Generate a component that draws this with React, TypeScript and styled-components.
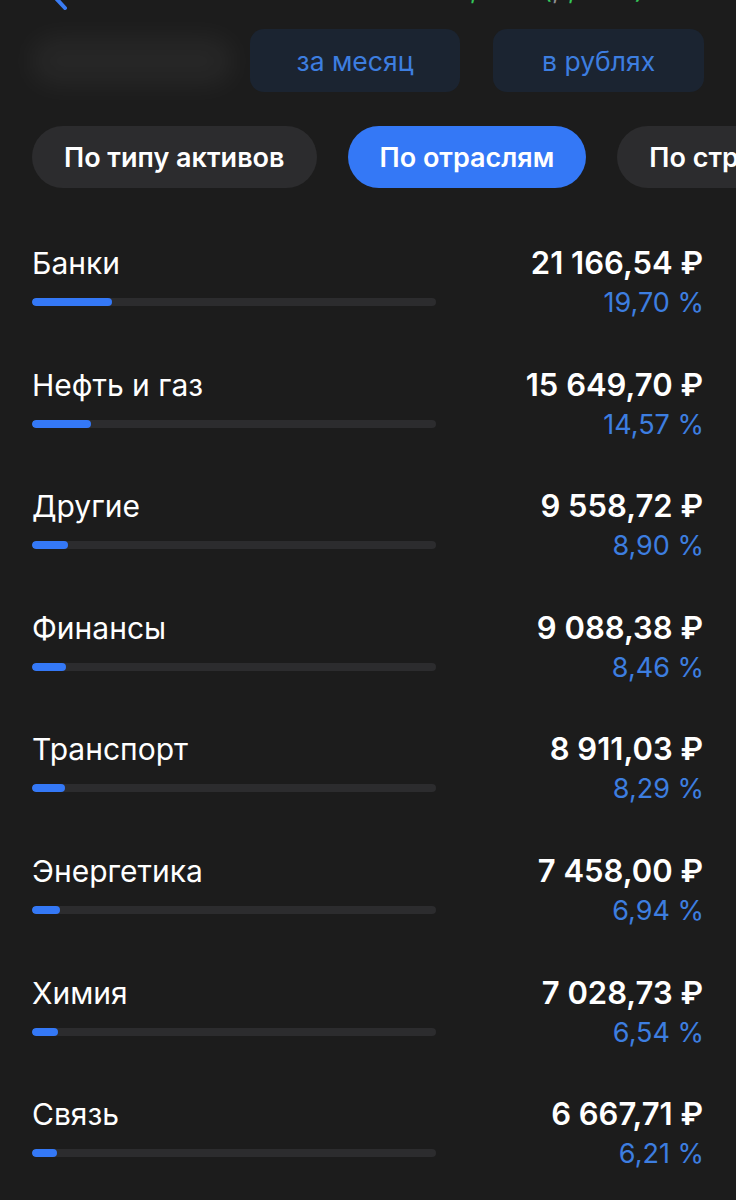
import styled, { createGlobalStyle } from "styled-components";

type SectorType = {
    name: string,
    amount: string,
    pct: number
}

const sectors: SectorType[] = [
    { name: "Банки", amount: "21 166,54 ₽", pct: 19.7 },
    { name: "Нефть и газ", amount: "15 649,70 ₽", pct: 14.57 },
    { name: "Другие", amount: "9 558,72 ₽", pct: 8.9 },
    { name: "Финансы", amount: "9 088,38 ₽", pct: 8.46 },
    { name: "Транспорт", amount: "8 911,03 ₽", pct: 8.29 },
    { name: "Энергетика", amount: "7 458,00 ₽", pct: 6.94 },
    { name: "Химия", amount: "7 028,73 ₽", pct: 6.54 },
    { name: "Связь", amount: "6 667,71 ₽", pct: 6.21 },
]

const formatPct = (v: number) => v.toFixed(2).replace(".", ",") + " %"

const GlobalStyle = createGlobalStyle`
    body {
        margin: 0;
        background: #1c1c1c;
        font-family: Inter, "Noto Sans", sans-serif;
        color: #fff;
    }
`

export default function App() {
    return (
        <Page>
            <GlobalStyle />
            <TopBar>
                <BackIcon width="28" height="40" viewBox="0 0 28 40">
                    <path d="M24 6 L10 22 L23 36" fill="none" stroke="#3a7cf4" strokeWidth="4" strokeLinecap="round" strokeLinejoin="round" />
                </BackIcon>
                <Change>
                    <Green>+1 284,20 ₽ (</Green><Grey>,</Grey><Green>1,21 %)</Green>
                </Change>
            </TopBar>
            <Summary>
                <Blurred />
                <Filter>за месяц</Filter>
                <Filter>в рублях</Filter>
            </Summary>
            <Tabs>
                <Tab>По типу активов</Tab>
                <Tab $active>По отраслям</Tab>
                <Tab>По странам</Tab>
            </Tabs>
            <List>
                {sectors.map(s => (
                    <Row key={s.name}>
                        <Left>
                            <Name>{s.name}</Name>
                            <Track>
                                <Fill style={{ width: `${s.pct}%` }} />
                            </Track>
                        </Left>
                        <Right>
                            <Amount>{s.amount}</Amount>
                            <Pct>{formatPct(s.pct)}</Pct>
                        </Right>
                    </Row>
                ))}
            </List>
        </Page>
    );
}

const Page = styled.div`
    width: 736px;
    height: 1200px;
    overflow: hidden;
    background: #1c1c1c;
`

const TopBar = styled.div`
    height: 10px;
    overflow: hidden;
    display: flex;
    align-items: flex-end;
    justify-content: space-between;
    padding: 0 92px 0 42px;
`

const BackIcon = styled.svg`
    flex: none;
    margin-bottom: -2px;
`

const Change = styled.div`
    font-size: 26px;
    line-height: 30px;
    margin-bottom: 5px;
    white-space: nowrap;
`

const Green = styled.span`
    color: #34c759;
`

const Grey = styled.span`
    color: #8e8e93;
`

const Summary = styled.div`
    display: flex;
    align-items: center;
    gap: 33px;
    padding: 19px 32px 0 32px;
`

const Blurred = styled.div`
    width: 200px;
    height: 46px;
    margin-right: -15px;
    border-radius: 20px;
    background: rgba(255, 255, 255, 0.05);
    filter: blur(14px);
`

const Filter = styled.div`
    width: 211px;
    height: 63px;
    border-radius: 14px;
    background: #1b2431;
    color: #3d7ee0;
    font-size: 26.5px;
    display: flex;
    align-items: center;
    justify-content: center;
`

const Tabs = styled.div`
    display: flex;
    gap: 31px;
    padding: 34px 0 0 32px;
    overflow: hidden;
`

const Tab = styled.div<{ $active?: boolean }>`
    flex: none;
    height: 62px;
    padding: 0 32px;
    border-radius: 31px;
    background: ${p => p.$active ? "#3478f6" : "#2c2c2e"};
    color: #fff;
    font-size: 27px;
    font-weight: 600;
    display: flex;
    align-items: center;
`

const List = styled.div`
    padding: 55px 33px 0 32px;
`

const Row = styled.div`
    height: 121.6px;
    display: flex;
    justify-content: space-between;
    align-items: flex-start;
`

const Left = styled.div`
    width: 404px;
`

const Name = styled.div`
    font-size: 30px;
    line-height: 40px;
`

const Track = styled.div`
    margin-top: 15px;
    height: 8px;
    border-radius: 4px;
    background: #2c2c2e;
    overflow: hidden;
`

const Fill = styled.div`
    height: 100%;
    border-radius: 4px;
    background: #3478f6;
`

const Right = styled.div`
    text-align: right;
`

const Amount = styled.div`
    font-size: 31px;
    font-weight: 600;
    line-height: 40px;
`

const Pct = styled.div`
    font-size: 27px;
    line-height: 40px;
    color: #3d7ee0;
    margin-right: -1px;
`
